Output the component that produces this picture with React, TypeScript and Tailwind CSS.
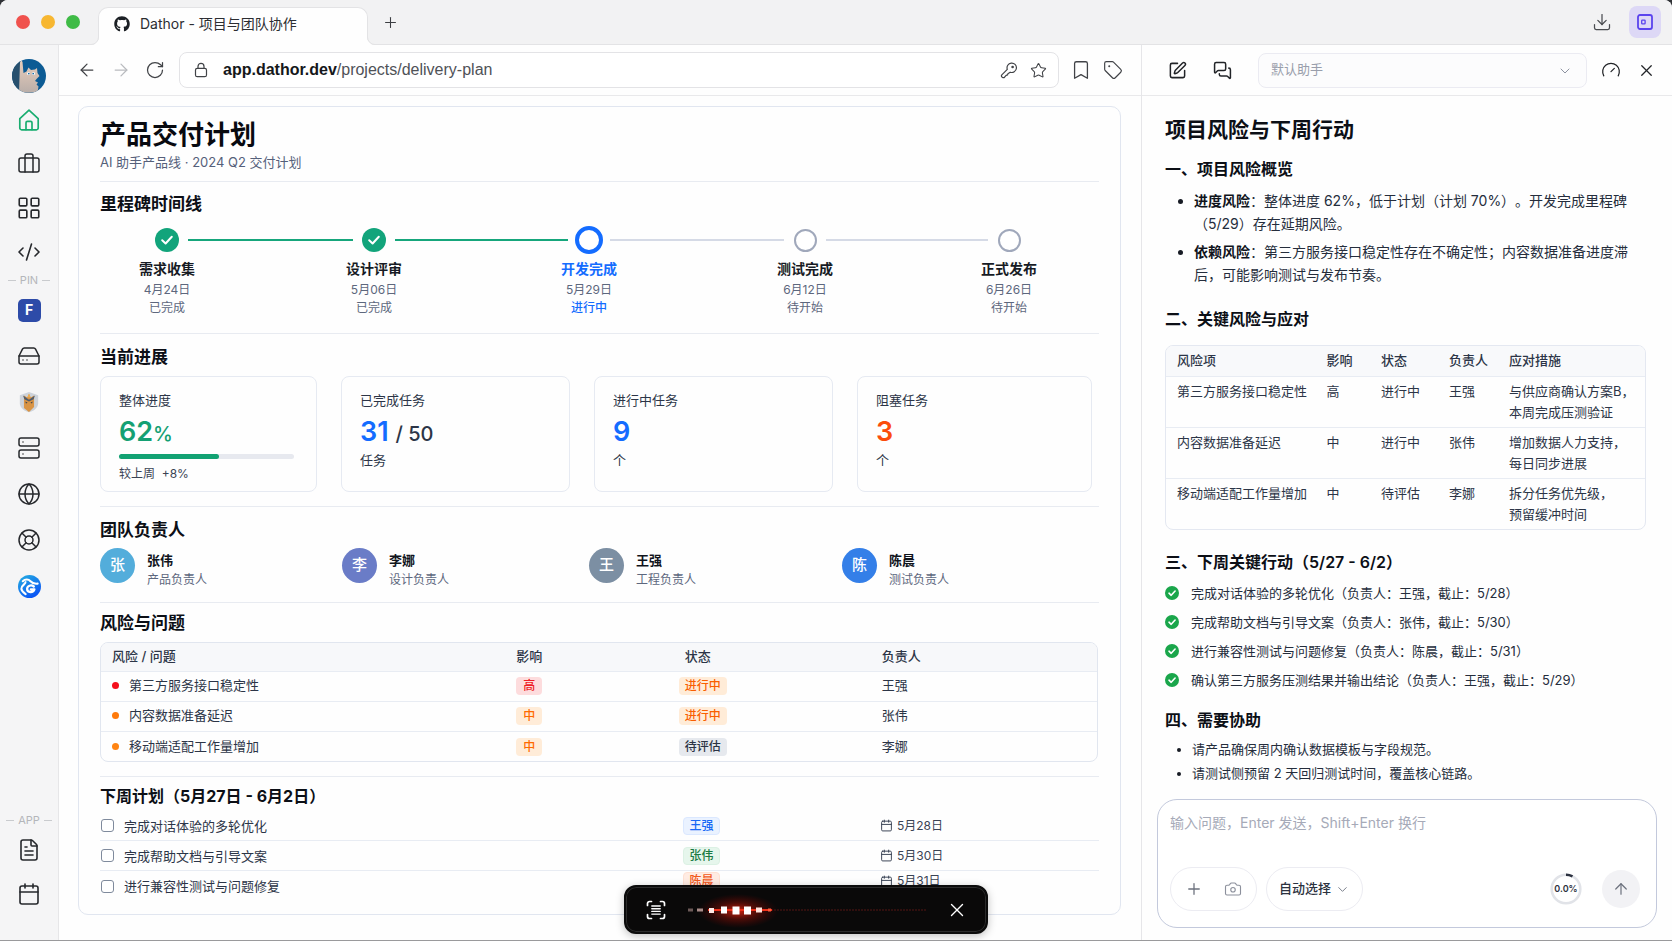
import React from 'react';
import {
  ArrowLeft,
  ArrowRight,
  ArrowUp,
  Bookmark,
  Briefcase,
  Calendar,
  Camera,
  ChevronDown,
  CodeXml,
  Download,
  FileText,
  Gauge,
  Globe,
  HardDrive,
  LayoutGrid,
  LifeBuoy,
  MessagesSquare,
  Plus,
  RotateCw,
  Server,
  SquarePen,
  Star,
  Tag,
  X,
} from 'lucide-react';
import { FaGithub } from 'react-icons/fa';

const milestones = [
  { name: '需求收集', date: '4月24日', status: '已完成', state: 'done' },
  { name: '设计评审', date: '5月06日', status: '已完成', state: 'done' },
  { name: '开发完成', date: '5月29日', status: '进行中', state: 'current' },
  { name: '测试完成', date: '6月12日', status: '待开始', state: 'todo' },
  { name: '正式发布', date: '6月26日', status: '待开始', state: 'todo' },
];

const connectors = [
  'flex-[165] bg-[#16a67c]',
  'flex-[173] bg-[#16a67c]',
  'flex-[174] bg-[#d5dae6]',
  'flex-[162] bg-[#d5dae6]',
];

const owners = [
  { initial: '张', name: '张伟', role: '产品负责人', color: 'bg-[#53addb]' },
  { initial: '李', name: '李娜', role: '设计负责人', color: 'bg-[#6a7cc7]' },
  { initial: '王', name: '王强', role: '工程负责人', color: 'bg-[#7c8fa3]' },
  { initial: '陈', name: '陈晨', role: '测试负责人', color: 'bg-[#347fe8]' },
];

const risks = [
  { title: '第三方服务接口稳定性', level: '高', status: '进行中', owner: '王强', dot: 'bg-[#f5101c]' },
  { title: '内容数据准备延迟', level: '中', status: '进行中', owner: '张伟', dot: 'bg-[#ff7a0a]' },
  { title: '移动端适配工作量增加', level: '中', status: '待评估', owner: '李娜', dot: 'bg-[#ff8412]' },
];

const levelStyle: Record<string, string> = {
  高: 'bg-[#fddcdd] text-[#ee1c25]',
  中: 'bg-[#ffecd8] text-[#ff6a00]',
};

const statusStyle: Record<string, string> = {
  进行中: 'bg-[#ffecd8] text-[#f95f00]',
  待评估: 'bg-[#e6e9ee] text-[#2b3445]',
};

const plans = [
  { title: '完成对话体验的多轮优化', owner: '王强', date: '5月28日', badge: 'bg-[#eaf2ff] border-[#dbe8ff] text-[#1768f5]' },
  { title: '完成帮助文档与引导文案', owner: '张伟', date: '5月30日', badge: 'bg-[#e6f6ec] border-[#dcf1e4] text-[#1b7a43]' },
  { title: '进行兼容性测试与问题修复', owner: '陈晨', date: '5月31日', badge: 'bg-[#ffece3] border-[#ffe1d3] text-[#f2591b]' },
];

const measures = [
  { risk: '第三方服务接口稳定性', level: '高', status: '进行中', owner: '王强', plan: ['与供应商确认方案B，', '本周完成压测验证'] },
  { risk: '内容数据准备延迟', level: '中', status: '进行中', owner: '张伟', plan: ['增加数据人力支持，', '每日同步进展'] },
  { risk: '移动端适配工作量增加', level: '中', status: '待评估', owner: '李娜', plan: ['拆分任务优先级，', '预留缓冲时间'] },
];

const actions = [
  '完成对话体验的多轮优化（负责人：王强，截止：5/28）',
  '完成帮助文档与引导文案（负责人：张伟，截止：5/30）',
  '进行兼容性测试与问题修复（负责人：陈晨，截止：5/31）',
  '确认第三方服务压测结果并输出结论（负责人：王强，截止：5/29）',
];

/* ---------- Icons ---------- */

const HomeIcon = () => (
  <svg viewBox="0 0 24 24" className="size-6" fill="none" stroke="#19ad70" strokeWidth="1.7" strokeLinejoin="round" strokeLinecap="round">
    <path d="M2.800 10.600 12 2.200l9.200 8.400V20a1.800 1.800 0 0 1-1.800 1.800H4.600A1.800 1.800 0 0 1 2.800 20z" />
    <path d="M9 21.600v-6.800a1.400 1.400 0 0 1 1.400-1.400h3.200a1.400 1.400 0 0 1 1.400 1.400v6.800" />
  </svg>
);

const LockIcon = () => (
  <svg viewBox="0 0 16 16" className="size-4" fill="none" stroke="currentColor" strokeWidth="1.2" strokeLinejoin="round">
    <rect x="2.5" y="6.3" width="11" height="8.4" rx="1.8" />
    <path d="M5 6.2V4.4a3 3 0 0 1 6 0v1.8" />
  </svg>
);

const KeyIcon = () => (
  <svg viewBox="0 0 18 18" className="size-[18px]" fill="none" stroke="currentColor" strokeWidth="1.2" strokeLinejoin="round" strokeLinecap="round">
    <path d="M7.300 8.300a4.700 4.700 0 1 1 2.900 2.900l-2.300 1.500-.3 1.200-1.500.4-1.300 1.500a1.800 1.800 0 0 1-3-2z" />
    <circle cx="12.600" cy="6" r=".7" fill="currentColor" />
  </svg>
);

const ScanIcon = () => (
  <svg viewBox="0 0 20 20" className="size-5" fill="none" stroke="currentColor" strokeWidth="1.7" strokeLinecap="round" strokeLinejoin="round">
    <path d="M1.500 5.500V3.500a2 2 0 0 1 2-2h2M14.500 1.500h2a2 2 0 0 1 2 2v2M18.500 14.500v2a2 2 0 0 1-2 2h-2M5.500 18.500h-2a2 2 0 0 1-2-2v-2" />
    <path d="M5.800 6h8.400M5.800 8.700h8.400M5.800 11.400h8.400M5.800 14.100h8.400" strokeWidth="1.400" />
  </svg>
);

const AvatarArt = () => (
  <svg viewBox="0 0 34 34" className="size-[34px]">
    <defs>
      <clipPath id="avatar-clip">
        <circle cx="17" cy="17" r="17" />
      </clipPath>
      <linearGradient id="fur" x1="0" y1="0" x2="0" y2="1">
        <stop offset="0" stopColor="#e9cdbb" />
        <stop offset="1" stopColor="#b9aea9" />
      </linearGradient>
    </defs>
    <g clipPath="url(#avatar-clip)">
      <rect width="34" height="34" fill="#0c5b94" />
      <path d="M0 0h8v34H0z" fill="#27506e" />
      <path d="M7 34 8 3.500q1-3 2.500-.5l1 11 3-1.500 2-4 2.500 2.500 4-.5 2-1.500.5 5 2 3-3 3-1.500 2 3 1.500-1.500 2 2 2-1 6z" fill="url(#fur)" />
      <circle cx="16.500" cy="14.500" r="1.500" fill="#fff" />
      <circle cx="21.500" cy="14.500" r="1.500" fill="#fff" />
      <circle cx="16.800" cy="14.600" r=".9" fill="#1c6ea8" />
      <circle cx="21.200" cy="14.600" r=".9" fill="#1c6ea8" />
    </g>
  </svg>
);

const OwlShield = () => (
  <svg viewBox="0 0 24 24" className="size-[22px]">
    <path d="M12 1.200 22 4.500v9c0 4.500-5 8.500-10 9.700C7 22 2 18 2 13.500v-9z" fill="#cdd3db" />
    <path d="m6.500 5 3.500 2.200L12 3l2 4.200L17.500 5v12.500L12 23l-5.500-4.500z" fill="#d99445" />
    <path d="M5.500 5 12 9.500 18.500 5 17 9l-5 2.500L7 9z" fill="#515c6b" />
    <path d="m8 11.500 2.500 1.300-1.800.9zM16 11.500l-2.500 1.300 1.800.9z" fill="#34404f" />
    <path d="m12 3 1.200 2.800L12 7.500l-1.200-1.700z" fill="#f0b04f" />
  </svg>
);

const SwirlLogo = () => (
  <svg viewBox="0 0 24 24" className="size-[23px]">
    <defs>
      <linearGradient id="swirl" x1="0" y1="0" x2=".6" y2="1">
        <stop offset="0" stopColor="#25b1e0" />
        <stop offset="1" stopColor="#0b55f5" />
      </linearGradient>
    </defs>
    <circle cx="12" cy="12" r="12" fill="url(#swirl)" />
    <g fill="none" stroke="#fff" strokeLinecap="round" strokeLinejoin="round">
      <path d="M5 6.500c2.500-2.500 6-2.200 8 0s4 3 7.500 2.500" strokeWidth="2.200" />
      <path d="M7.800 7.500c.3 2-4.800 3.500-4.300 7 .3 2.500 2.500 4 4.500 5.500" strokeWidth="2.200" />
      <path d="M16.500 12c-2.700-2.200-7-.8-7 2.700 0 3.800 6.400 4.200 7.600.4h-3.700" strokeWidth="2.400" />
    </g>
  </svg>
);

const CheckBadge = () => (
  <svg viewBox="0 0 14 14" className="size-[14px] shrink-0">
    <circle cx="7" cy="7" r="7" fill="#1aa64b" />
    <path d="m4 7.200 2.200 2.100L10.100 5" fill="none" stroke="#fff" strokeWidth="1.600" strokeLinecap="round" strokeLinejoin="round" />
  </svg>
);

const PanelIcon = () => (
  <svg viewBox="0 0 16 16" className="size-4" fill="none" stroke="#5a43ee">
    <rect x="1" y="1" width="14" height="14" rx="2" strokeWidth="1.800" />
    <rect x="4.700" y="6.200" width="3.400" height="3.600" rx=".6" strokeWidth="1.300" />
  </svg>
);

const VoiceWave = () => (
  <svg viewBox="0 0 240 36" className="h-9 min-w-0 flex-1">
    <defs>
      <radialGradient id="glow">
        <stop offset="0" stopColor="#ff2a12" stopOpacity=".8" />
        <stop offset=".5" stopColor="#d01505" stopOpacity=".32" />
        <stop offset="1" stopColor="#a00" stopOpacity="0" />
      </radialGradient>
    </defs>
    <ellipse cx="50" cy="19" rx="40" ry="17" fill="url(#glow)" />
    <path d="M80 18h158" stroke="#3c1210" strokeWidth="1.500" strokeDasharray="2 1" />
    <path d="M20 18h64" stroke="#f0301a" strokeWidth="2" />
    <rect x="0" y="16.500" width="5" height="3" fill="#6d5a58" />
    <rect x="9" y="16.500" width="6" height="3" fill="#a98c88" />
    <rect x="21" y="16" width="5" height="5" fill="#ffe9e4" />
    <rect x="33" y="14.500" width="6" height="7" fill="#fff" />
    <rect x="44.500" y="14.500" width="7" height="8" fill="#fff" />
    <rect x="56" y="14.500" width="7" height="8" fill="#fff" />
    <rect x="68" y="15.500" width="6" height="5" fill="#ffe3dc" />
    <rect x="80" y="16.500" width="3" height="3" fill="#ff5a3a" />
  </svg>
);

/* concave foot of the active tab */
const TabFoot = ({ className }: { className: string }) => (
  <svg viewBox="0 0 8 8" className={`absolute bottom-0 size-2 ${className}`}>
    <path d="M8 0v8H0a8 8 0 0 0 8-8" fill="#fefefe" />
    <path d="M0 7.500A7.500 7.500 0 0 0 7.500 0" fill="none" stroke="#e3e3e5" />
  </svg>
);

/* ---------- Small pieces ---------- */

const Divider = ({ label }: { label: string }) => (
  <div className="flex items-center justify-center gap-1 text-[11px] leading-4 text-[#b4b6ba]">
    <span className="h-px w-2 bg-[#c9cbce]" />
    {label}
    <span className="h-px w-2 bg-[#c9cbce]" />
  </div>
);

const NavButton = ({ label, children }: { label: string; children: React.ReactNode }) => (
  <button aria-label={label} className="flex size-6 items-center justify-center text-[#26282c]">
    {children}
  </button>
);

const Heading = ({ children }: { children: React.ReactNode }) => (
  <h2 className="text-[17px] leading-6 font-bold text-[#0c0f16]">{children}</h2>
);

const MilestoneMark = ({ state }: { state: string }) => {
  if (state === 'done') {
    return (
      <svg viewBox="0 0 24 24" className="size-6">
        <circle cx="12" cy="12" r="12" fill="#12a47b" />
        <path d="m7.200 12.300 3.400 3.200 6.200-6.700" fill="none" stroke="#fff" strokeWidth="2" strokeLinecap="round" strokeLinejoin="round" />
      </svg>
    );
  }
  if (state === 'current') {
    return <span className="size-7 rounded-full border-4 border-[#146cff] bg-white" />;
  }
  return <span className="size-[23px] rounded-full border-2 border-[#a0a8bb] bg-white" />;
};

const StatCard = ({ label, unit, children }: { label: string; unit?: string; children: React.ReactNode }) => (
  <div className="h-[116px] rounded-lg border border-[#e6eaf2] px-[18px] pt-[13px]">
    <div className="text-[13px] leading-5 text-[#2c3547]">{label}</div>
    <div className="mt-1.5 text-[27px] leading-8 font-semibold">{children}</div>
    {unit && <div className="mt-0.5 text-[13px] leading-5 text-[#2c3547]">{unit}</div>}
  </div>
);

/* ---------- Window chrome ---------- */

const TitleBar = () => (
  <header className="flex h-[45px] items-end border-b border-[#e3e3e5] bg-[#f2f2f3]">
    <div className="flex h-full w-[98px] shrink-0 items-center gap-[11px] pl-4">
      <span className="size-[14px] rounded-full bg-[#f0524d]" />
      <span className="size-[14px] rounded-full bg-[#f7b731]" />
      <span className="size-[14px] rounded-full bg-[#3fbb46]" />
    </div>
    <div className="relative -mb-px flex h-[38px] w-[270px] items-center gap-2.5 rounded-t-[10px] border border-b-0 border-[#e3e3e5] bg-[#fefefe] px-[15px] pb-1.5 text-sm text-[#2b2d31]">
      <TabFoot className="-left-2" />
      <FaGithub className="size-4 text-[#1b1f24]" />
      <span>Dathor - 项目与团队协作</span>
      <TabFoot className="-right-2 -scale-x-100" />
    </div>
    <button aria-label="新建标签页" className="flex h-full w-11 items-center justify-center text-[#3c3e42]">
      <Plus size={17} strokeWidth={1.5} />
    </button>
    <div className="ml-auto flex h-full items-center gap-[17px] pr-[11px]">
      <button aria-label="下载" className="text-[#4a4c50]">
        <Download size={20} strokeWidth={1.5} />
      </button>
      <button aria-label="侧边助手" className="flex size-8 items-center justify-center rounded-lg bg-[#ddd8f6]">
        <PanelIcon />
      </button>
    </div>
  </header>
);

const Sidebar = () => (
  <nav className="flex w-[59px] shrink-0 flex-col items-center border-r border-[#e6e6e8] bg-[#f5f5f6] pt-[14px] pb-[34px]">
    <AvatarArt />
    <div className="mt-[15px] flex flex-col gap-5">
      <NavButton label="主页"><HomeIcon /></NavButton>
      <NavButton label="工作"><Briefcase size={24} strokeWidth={1.5} /></NavButton>
      <NavButton label="应用"><LayoutGrid size={26} strokeWidth={1.5} className="shrink-0" /></NavButton>
      <NavButton label="代码"><CodeXml size={24} strokeWidth={1.6} /></NavButton>
    </div>
    <div className="mt-2"><Divider label="PIN" /></div>
    <div className="mt-[10px] flex flex-col gap-[22px]">
      <NavButton label="F">
        <span className="flex size-[23px] items-center justify-center rounded-[5px] bg-[#2d4ba8] text-sm leading-none font-bold text-white">F</span>
      </NavButton>
      <NavButton label="磁盘"><HardDrive size={24} strokeWidth={1.5} /></NavButton>
      <NavButton label="防护"><OwlShield /></NavButton>
      <NavButton label="服务器"><Server size={24} strokeWidth={1.5} /></NavButton>
      <NavButton label="网络"><Globe size={24} strokeWidth={1.5} /></NavButton>
      <NavButton label="帮助"><LifeBuoy size={24} strokeWidth={1.5} /></NavButton>
      <NavButton label="浏览"><SwirlLogo /></NavButton>
    </div>
    <div className="mt-auto"><Divider label="APP" /></div>
    <div className="mt-[10px] flex flex-col gap-5">
      <NavButton label="文档"><FileText size={24} strokeWidth={1.6} /></NavButton>
      <NavButton label="日历"><Calendar size={24} strokeWidth={1.6} /></NavButton>
    </div>
  </nav>
);

const Toolbar = () => (
  <div className="flex h-[51px] items-center border-b border-[#e9e9eb] pr-[18px] pl-[18px] text-[#414347]">
    <div className="flex w-[102px] items-center gap-[14px]">
      <button aria-label="后退"><ArrowLeft size={20} strokeWidth={1.5} /></button>
      <button aria-label="前进" className="text-[#b9bbbf]"><ArrowRight size={20} strokeWidth={1.5} /></button>
      <button aria-label="刷新"><RotateCw size={20} strokeWidth={1.5} /></button>
    </div>
    <div className="flex h-9 min-w-0 flex-1 items-center rounded-lg border border-[#e3e3e6] bg-white pr-[11px] pl-[13px]">
      <LockIcon />
      <a href="#" className="ml-[14px] flex-1 font-['Liberation_Sans',sans-serif] text-base text-[#4f5257]">
        <span className="font-bold text-[#15171a]">app.dathor.dev</span>/projects/delivery-plan
      </a>
      <button aria-label="密码"><KeyIcon /></button>
      <button aria-label="收藏" className="ml-3"><Star size={17} strokeWidth={1.5} /></button>
    </div>
    <button aria-label="书签" className="ml-[11px]"><Bookmark size={22} strokeWidth={1.4} /></button>
    <button aria-label="标签" className="ml-[11px]"><Tag size={20} strokeWidth={1.4} /></button>
  </div>
);

/* ---------- Project page ---------- */

const Timeline = () => (
  <div className="mt-2.5 flex pr-[69px] pl-[46px]">
    {milestones.map((m, i) => (
      <React.Fragment key={m.name}>
        <div className="flex w-[42px] flex-col items-center whitespace-nowrap">
          <div className="flex h-7 items-center"><MilestoneMark state={m.state} /></div>
          <div className={`mt-[5px] text-[14px] leading-5 font-semibold ${m.state === 'current' ? 'text-[#146cff]' : 'text-[#171b24]'}`}>{m.name}</div>
          <div className="mt-0.5 text-xs leading-[18px] text-[#5d677d]">{m.date}</div>
          <div className={`text-xs leading-[18px] ${m.state === 'current' ? 'font-medium text-[#146cff]' : 'text-[#5d677d]'}`}>{m.status}</div>
        </div>
        {i < connectors.length && <div className={`mt-[13px] h-0.5 ${connectors[i]}`} />}
      </React.Fragment>
    ))}
  </div>
);

const RiskTable = () => (
  <div className="mt-[7px] mr-px overflow-hidden rounded-lg border border-[#e1e6ef]">
    <table className="w-full table-fixed text-left text-[13px] text-[#2c3547]">
      <colgroup>
        <col className="w-[41.7%]" />
        <col className="w-[16.3%]" />
        <col className="w-[20.4%]" />
        <col />
      </colgroup>
      <thead className="bg-[#f7f8fa]">
        <tr className="h-7">
          <th className="pl-[11px] font-medium">风险 / 问题</th>
          <th className="font-medium">影响</th>
          <th className="pl-1.5 font-medium">状态</th>
          <th className="font-medium">负责人</th>
        </tr>
      </thead>
      <tbody>
        {risks.map((r) => (
          <tr key={r.title} className="h-[30px] border-t border-[#e8ecf3]">
            <td className="pl-[11px]">
              <span className={`mr-2.5 inline-block size-[7px] rounded-full align-[1px] ${r.dot}`} />
              {r.title}
            </td>
            <td>
              <span className={`inline-block rounded px-[7px] text-xs leading-[18px] font-medium ${levelStyle[r.level]}`}>{r.level}</span>
            </td>
            <td>
              <span className={`inline-block rounded px-1.5 text-xs leading-[18px] font-medium ${statusStyle[r.status]}`}>{r.status}</span>
            </td>
            <td>{r.owner}</td>
          </tr>
        ))}
      </tbody>
    </table>
  </div>
);

const PlanList = () => (
  <ul className="mt-[3px] divide-y divide-[#e8ecf3]">
    {plans.map((p, i) => (
      <li
        key={p.title}
        className={`grid h-[30px] grid-cols-[583fr_197fr_219fr] ${i === plans.length - 1 ? 'items-start pt-px' : 'items-center'}`}
      >
        <label className="flex items-center gap-2.5 pl-px text-[13px] leading-7 text-[#2c3547]">
          <input type="checkbox" className="size-[13px] appearance-none rounded-[3px] border-[1.5px] border-[#7f8a9c] bg-white" />
          {p.title}
        </label>
        <div>
          <span className={`block w-[37px] rounded border text-center text-xs leading-4 font-medium ${p.badge}`}>{p.owner}</span>
        </div>
        <div className="flex items-center gap-1 text-xs leading-[18px] text-[#3a4354]">
          <Calendar size={13} strokeWidth={1.8} />
          {p.date}
        </div>
      </li>
    ))}
  </ul>
);

const ProjectPage = () => (
  <article className="mt-2.5 mr-5 mb-[25px] ml-[19px] rounded-[10px] border border-[#e1e6f0] bg-[#fefefe] px-[21px] pt-3 pb-[13px]">
    <h1 className="text-[26px] leading-8 font-bold text-[#080a10]">产品交付计划</h1>
    <p className="mt-px pb-[9px] text-[13px] leading-5 text-[#55607a]">AI 助手产品线 · 2024 Q2 交付计划</p>

    <section className="border-t border-[#e8ebf1] pt-2.5 pb-4">
      <Heading>里程碑时间线</Heading>
      <Timeline />
    </section>

    <section className="border-t border-[#e8ebf1] pt-[11px] pb-3.5">
      <Heading>当前进展</Heading>
      <div className="mt-[7px] mr-[7px] grid grid-cols-[217fr_229fr_239fr_235fr] gap-6">
        <StatCard label="整体进度">
          <div className="text-[#14a073]">62<span className="text-xl font-medium">%</span></div>
          <div className="mt-1.5 mr-1 h-[5px] rounded-full bg-[#e7e9ef]">
            <div className="h-full w-[57%] rounded-full bg-[#12a273]" />
          </div>
          <div className="mt-1.5 text-xs leading-[18px] font-normal text-[#3a4354]">较上周&nbsp; +8%</div>
        </StatCard>
        <StatCard label="已完成任务" unit="任务">
          <span className="text-[#146cff]">31</span>{' '}
          <span className="text-xl font-medium text-[#2c3547]">/ 50</span>
        </StatCard>
        <StatCard label="进行中任务" unit="个"><span className="text-[#146cff]">9</span></StatCard>
        <StatCard label="阻塞任务" unit="个"><span className="text-[#fb4d0c]">3</span></StatCard>
      </div>
    </section>

    <section className="border-t border-[#e8ebf1] pt-[11px] pb-[19px]">
      <Heading>团队负责人</Heading>
      <div className="mt-1.5 grid h-[35px] grid-cols-[242fr_247fr_253fr_257fr]">
        {owners.map((o) => (
          <div key={o.name} className="flex items-start gap-3">
            <span className={`flex size-[35px] items-center justify-center rounded-full text-[15px] font-medium text-white ${o.color}`}>{o.initial}</span>
            <div className="pt-0.5 leading-5">
              <div className="text-[13px] leading-5 font-bold text-[#10141c]">{o.name}</div>
              <div className="text-xs leading-5 text-[#5d677d]">{o.role}</div>
            </div>
          </div>
        ))}
      </div>
    </section>

    <section className="border-t border-[#e8ebf1] pt-2 pb-3.5">
      <Heading>风险与问题</Heading>
      <RiskTable />
    </section>

    <section className="border-t border-[#e8ebf1] pt-[7px]">
      <h2 className="text-base leading-6 font-bold text-[#0c0f16]">下周计划（5月27日 - 6月2日）</h2>
      <PlanList />
    </section>
  </article>
);

/* ---------- Assistant panel ---------- */

const SubHeading = ({ className = '', children }: { className?: string; children: React.ReactNode }) => (
  <h3 className={`text-base leading-6 font-semibold text-[#0c0f16] ${className}`}>{children}</h3>
);

const AssistantHeader = () => (
  <div className="flex h-[51px] items-center border-b border-[#e9e9eb] pr-4 pl-[26px] text-[#222428]">
    <button aria-label="新对话"><SquarePen size={19} strokeWidth={1.9} /></button>
    <button aria-label="历史对话" className="ml-[26px]"><MessagesSquare size={19} strokeWidth={1.9} /></button>
    <div className="relative ml-[26px] flex-1">
      <select aria-label="助手" className="h-[35px] w-full appearance-none rounded-lg border border-[#ebebf2] bg-[#fcfcfd] px-3 text-[13px] text-[#999eab]">
        <option>默认助手</option>
      </select>
      <ChevronDown size={16} strokeWidth={1.5} className="pointer-events-none absolute top-[10px] right-[14px] text-[#8d92a0]" />
    </div>
    <button aria-label="用量" className="ml-3.5"><Gauge size={20} strokeWidth={1.5} /></button>
    <button aria-label="关闭" className="ml-4"><X size={19} strokeWidth={1.6} /></button>
  </div>
);

const MeasureTable = () => (
  <div className="mt-[14px] overflow-hidden rounded-lg border border-[#e4e8f1]">
    <table className="w-full table-fixed text-left text-[13px] leading-[21px] text-[#2c3547]">
      <colgroup>
        <col className="w-[33.5%]" />
        <col className="w-[11.4%]" />
        <col className="w-[14.2%]" />
        <col className="w-[12.5%]" />
        <col />
      </colgroup>
      <thead className="bg-[#f8f9fb]">
        <tr className="h-[30px]">
          <th className="pl-[11px] font-medium">风险项</th>
          <th className="font-medium">影响</th>
          <th className="font-medium">状态</th>
          <th className="font-medium">负责人</th>
          <th className="font-medium">应对措施</th>
        </tr>
      </thead>
      <tbody>
        {measures.map((m) => (
          <tr key={m.risk} className="border-t border-[#e8ecf3] align-top">
            <td className="pt-1 pb-1 pl-[11px] whitespace-nowrap">{m.risk}</td>
            <td className="pt-1">{m.level}</td>
            <td className="pt-1">{m.status}</td>
            <td className="pt-1">{m.owner}</td>
            <td className="pt-1 pb-1 whitespace-nowrap">{m.plan[0]}<br />{m.plan[1]}</td>
          </tr>
        ))}
      </tbody>
    </table>
  </div>
);

const Composer = () => (
  <form className="mr-[15px] ml-[15px] mt-auto mb-3 flex h-[129px] flex-col justify-between rounded-[20px] border-[1.5px] border-[#c3c9dc] bg-white pt-[11px] pr-4 pb-4 pl-3">
    <textarea
      aria-label="输入问题"
      placeholder="输入问题，Enter 发送，Shift+Enter 换行"
      className="h-12 resize-none text-[14px] leading-6 text-[#2c3547] outline-none placeholder:text-[#a6aab8]"
    />
    <div className="flex items-center">
      <div className="flex h-11 w-[87px] items-center justify-between rounded-full border border-[#ececf2] px-[14px] text-[#6c717d]">
        <button type="button" aria-label="添加"><Plus size={18} strokeWidth={1.7} /></button>
        <button type="button" aria-label="截图" className="text-[#8c909c]"><Camera size={18} strokeWidth={1.5} /></button>
      </div>
      <button type="button" className="ml-[9px] flex h-11 w-[97px] items-center justify-center gap-1 rounded-full border border-[#ececf2] text-[13px] font-medium text-[#2c3240]">
        自动选择
        <ChevronDown size={15} strokeWidth={1.6} className="text-[#7c818d]" />
      </button>
      <div className="relative ml-auto flex size-8 items-center justify-center">
        <svg viewBox="0 0 32 32" className="absolute inset-0" fill="none">
          <circle cx="16" cy="16" r="14.300" stroke="#e1e3e8" strokeWidth="2.600" />
          <path d="M16 1.700a14.300 14.300 0 0 1 6.500 1.600" stroke="#2c3240" strokeWidth="2.600" />
        </svg>
        <span className="relative text-[9px] font-semibold text-[#2c3240]">0.0%</span>
      </div>
      <button aria-label="发送" className="ml-5 flex size-[38px] items-center justify-center rounded-full bg-[#f2f2f5] text-[#6c717d]">
        <ArrowUp size={18} strokeWidth={1.6} />
      </button>
    </div>
  </form>
);

const AssistantPanel = () => (
  <aside className="flex w-[531px] shrink-0 flex-col border-l border-[#e6e6e9]">
    <AssistantHeader />
    <div className="pt-5 pr-[26px] pl-[23px]">
      <h2 className="text-[21px] leading-7 font-semibold text-[#0c0f16]">项目风险与下周行动</h2>
      <SubHeading className="mt-[13px]">一、项目风险概览</SubHeading>
      <ul className="mt-2 list-disc space-y-[5px] pl-[29px] text-[14px] leading-[23px] text-[#252d3c] [text-spacing-trim:space-all] marker:text-[#171b24]">
        <li><b className="font-semibold text-[#10141c]">进度风险</b>：整体进度 62%，低于计划（计划 70%）。开发完成里程碑（5/29）存在延期风险。</li>
        <li><b className="font-semibold text-[#10141c]">依赖风险</b>：第三方服务接口稳定性存在不确定性；内容数据准备进度滞后，可能影响测试与发布节奏。</li>
      </ul>

      <SubHeading className="mt-[21px]">二、关键风险与应对</SubHeading>
      <MeasureTable />

      <SubHeading className="mt-5">三、下周关键行动（5/27 - 6/2）</SubHeading>
      <ul className="mt-[5px] text-[13px] leading-[29px] text-[#252d3c]">
        {actions.map((a) => (
          <li key={a} className="flex items-center gap-3"><CheckBadge />{a}</li>
        ))}
      </ul>

      <SubHeading className="mt-[13px]">四、需要协助</SubHeading>
      <ul className="mt-[5px] list-disc pl-[27px] text-[13px] leading-6 text-[#252d3c] marker:text-[#171b24]">
        <li>请产品确保周内确认数据模板与字段规范。</li>
        <li>请测试侧预留 2 天回归测试时间，覆盖核心链路。</li>
      </ul>
    </div>
    <Composer />
  </aside>
);

const VoiceBar = () => (
  <div className="absolute bottom-1.5 left-[48.2%] flex h-[49px] w-[364px] -translate-x-1/2 items-center rounded-xl border-2 border-[#0b0b0b] bg-[#0a0909] pr-[19px] pl-5 text-white shadow-[inset_0_0_0_1px_#2b2b2b,0_2px_8px_rgba(0,0,0,0.25)]">
    <button aria-label="识别文字"><ScanIcon /></button>
    <div className="mr-[18px] ml-[22px] flex flex-1"><VoiceWave /></div>
    <button aria-label="关闭语音" className="mr-0.5"><X size={22} strokeWidth={1.5} /></button>
  </div>
);

const App: React.FC = () => (
  <div lang="zh-CN" className="min-h-screen bg-[#303236] font-['Inter','Noto_Sans_CJK_SC',sans-serif]">
    <div className="relative flex min-h-screen flex-col overflow-hidden rounded-t-lg border-b border-[#9a9a9c] bg-[#fefefe]">
      <TitleBar />
      <div className="flex flex-1">
        <Sidebar />
        <main className="min-w-0 flex-1">
          <Toolbar />
          <ProjectPage />
        </main>
        <AssistantPanel />
      </div>
      <VoiceBar />
    </div>
  </div>
);

export default App;
